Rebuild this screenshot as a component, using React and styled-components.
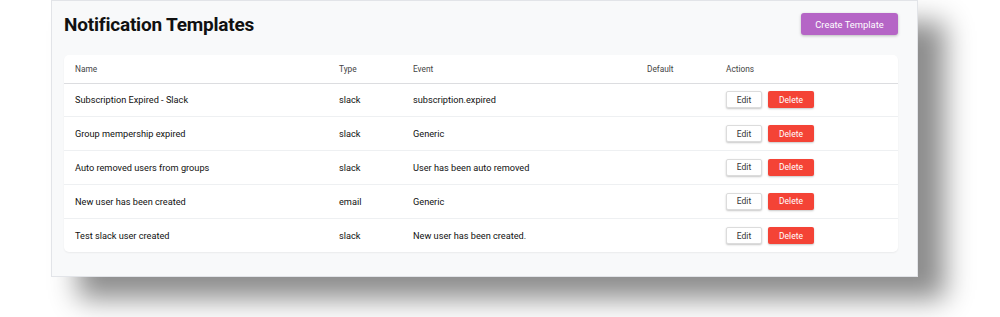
import styled, { createGlobalStyle } from "styled-components";

const GlobalStyle = createGlobalStyle`
    html, body {
        margin: 0;
        padding: 0;
        background: #fff;
        font-family: Roboto, "Liberation Sans", sans-serif;
    }
`

const templates = [
    { name: "Subscription Expired - Slack", type: "slack", event: "subscription.expired" },
    { name: "Group mempership expired", type: "slack", event: "Generic" },
    { name: "Auto removed users from groups", type: "slack", event: "User has been auto removed" },
    { name: "New user has been created", type: "email", event: "Generic" },
    { name: "Test slack user created", type: "slack", event: "New user has been created." },
]

const App = () => {
    return (
        <>
            <GlobalStyle />
            <Page>
                <Panel>
                    <TopBar>
                        <Title>Notification Templates</Title>
                        <CreateButton>Create Template</CreateButton>
                    </TopBar>
                    <Card>
                        <HeadRow>
                            <HeadCell>Name</HeadCell>
                            <HeadCell>Type</HeadCell>
                            <HeadCell>Event</HeadCell>
                            <HeadCell>Default</HeadCell>
                            <HeadCell>Actions</HeadCell>
                        </HeadRow>
                        {templates.map((t) => (
                            <Row key={t.name}>
                                <Cell>{t.name}</Cell>
                                <Cell>{t.type}</Cell>
                                <Cell>{t.event}</Cell>
                                <Cell></Cell>
                                <Cell>
                                    <Actions>
                                        <EditBtn>Edit</EditBtn>
                                        <DeleteBtn>Delete</DeleteBtn>
                                    </Actions>
                                </Cell>
                            </Row>
                        ))}
                    </Card>
                </Panel>
            </Page>
        </>
    )
}

const Page = styled.div`
    width: 1000px;
    height: 317px;
    padding-left: 51px;
    box-sizing: border-box;
    overflow: hidden;
`

const Panel = styled.div`
    width: 867px;
    height: 277px;
    box-sizing: border-box;
    background: #f8f9fa;
    border: 1px solid #e2e4e8;
    box-shadow: 27px 22px 26px rgba(0, 0, 0, 0.45);
    padding: 12px 19px 0 12px;
`

const TopBar = styled.div`
    display: flex;
    justify-content: space-between;
    align-items: flex-start;
    height: 42px;
`

const Title = styled.h1`
    margin: 0;
    font-size: 19px;
    font-weight: 700;
    color: #111;
    letter-spacing: -0.2px;
    line-height: 24px;
`

const CreateButton = styled.button`
    width: 97px;
    height: 22px;
    border: 0;
    border-radius: 3px;
    background: #b565c6;
    color: #fff;
    font-family: inherit;
    font-size: 9.4px;
    padding: 0;
    box-shadow: 0 1px 3px rgba(0, 0, 0, 0.25);
    cursor: pointer;
`

const Card = styled.div`
    background: #fff;
    border-radius: 5px;
    box-shadow: 0 1px 2px rgba(0, 0, 0, 0.06);
`

const grid = `
    display: grid;
    grid-template-columns: 264px 74px 234px 79px 1fr;
    align-items: center;
    box-sizing: border-box;
`

const HeadRow = styled.div`
    ${grid}
    height: 28.5px;
    border-bottom: 1.5px solid #dcdde0;
`

const HeadCell = styled.div`
    padding-left: 11px;
    font-size: 8.3px;
    color: #444;
`

const Row = styled.div`
    ${grid}
    height: 33.8px;
    border-bottom: 1px solid #eef0f2;

    &:last-child {
        border-bottom: 0;
    }
`

const Cell = styled.div`
    padding-left: 11px;
    font-size: 9.2px;
    color: #111;
`

const Actions = styled.div`
    display: flex;
    gap: 6px;
`

const SmallBtn = styled.button`
    height: 17px;
    border-radius: 2px;
    font-family: inherit;
    font-size: 8.5px;
    padding: 0;
    cursor: pointer;
    box-shadow: 0 1px 2px rgba(0, 0, 0, 0.22);
`

const EditBtn = styled(SmallBtn)`
    width: 36px;
    background: #fff;
    color: #333;
    border: 1px solid #dcdcdc;
`

const DeleteBtn = styled(SmallBtn)`
    width: 46px;
    background: #f44336;
    color: #fff;
    border: 0;
`

export default App
